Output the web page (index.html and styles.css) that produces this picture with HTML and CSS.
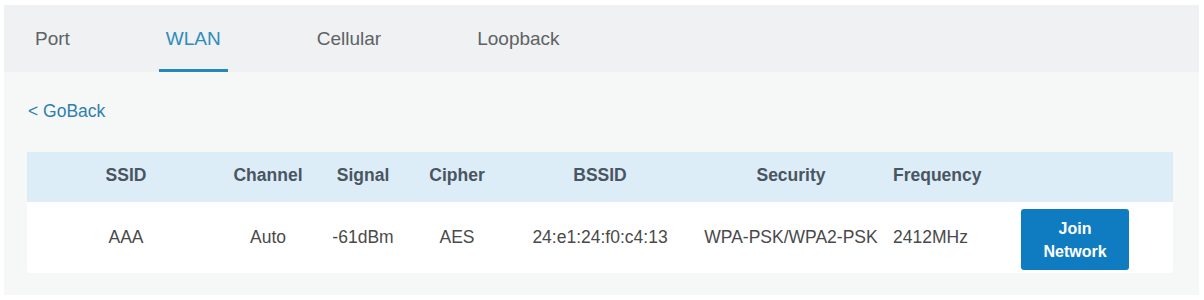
FILE: index.html
```html
<!DOCTYPE html>
<html>
<head>
<meta charset="utf-8">
<link rel="stylesheet" href="styles.css">
</head>
<body>
<div class="page">
  <div class="tabs">
    <div class="tab">Port</div>
    <div class="tab active">WLAN</div>
    <div class="tab">Cellular</div>
    <div class="tab">Loopback</div>
  </div>
  <div class="content">
    <a class="goback">&lt; GoBack</a>
    <div class="table">
      <div class="row head">
        <div class="cell">SSID</div>
        <div class="cell">Channel</div>
        <div class="cell">Signal</div>
        <div class="cell">Cipher</div>
        <div class="cell">BSSID</div>
        <div class="cell">Security</div>
        <div class="cell left">Frequency</div>
        <div class="cell"></div>
      </div>
      <div class="row body">
        <div class="cell">AAA</div>
        <div class="cell">Auto</div>
        <div class="cell">-61dBm</div>
        <div class="cell">AES</div>
        <div class="cell">24:e1:24:f0:c4:13</div>
        <div class="cell">WPA-PSK/WPA2-PSK</div>
        <div class="cell left">2412MHz</div>
        <div class="cell action"><button class="join">Join<br>Network</button></div>
      </div>
    </div>
  </div>
</div>
</body>
</html>
```
FILE: styles.css
```css
html, body {
  margin: 0;
  padding: 0;
  background: #ffffff;
}
body {
  font-family: "Liberation Sans", Arial, sans-serif;
}
.page {
  margin: 5px 5px 5px 4px;
}
.tabs {
  height: 67px;
  background: #eff1f2;
  display: flex;
  gap: 82px;
  padding-left: 24px;
}
.tab {
  display: flex;
  align-items: center;
  padding: 4px 7px 0;
  font-size: 19px;
  color: #606265;
  box-sizing: border-box;
  border-bottom: 3px solid transparent;
}
.tab.active {
  color: #2f8cbb;
  border-bottom-color: #2289b9;
}
.content {
  background: #f6f8f8;
  padding: 27px 26px 22px 23px;
}
.goback {
  display: block;
  font-size: 17.5px;
  line-height: 24px;
  color: #2f7fae;
  margin-left: 1px;
  margin-bottom: 29px;
}
.table {
  background: #ffffff;
  border-radius: 0 0 4px 4px;
  overflow: hidden;
}
.row {
  display: grid;
  grid-template-columns: 198px 86px 104px 84px 202px 180px 140px 1fr;
  align-items: center;
}
.row.head {
  height: 50px;
  box-sizing: border-box;
  padding-bottom: 4px;
  background: #dcedf8;
  font-weight: bold;
  font-size: 17.5px;
  color: #4a5561;
}
.row.body {
  height: 71px;
  box-sizing: border-box;
  padding-bottom: 1px;
  font-size: 17.5px;
  color: #4a4a4a;
}
.cell {
  text-align: center;
  white-space: nowrap;
}
.cell.left {
  text-align: left;
  padding-left: 12px;
}
.cell.action {
  text-align: left;
  padding-top: 5px;
}
.join {
  width: 108px;
  height: 61px;
  border: none;
  border-radius: 3px;
  background: #0f7cc1;
  color: #ffffff;
  font-family: "Liberation Sans", Arial, sans-serif;
  font-weight: bold;
  font-size: 16px;
  line-height: 23px;
  padding: 0;
}
```
